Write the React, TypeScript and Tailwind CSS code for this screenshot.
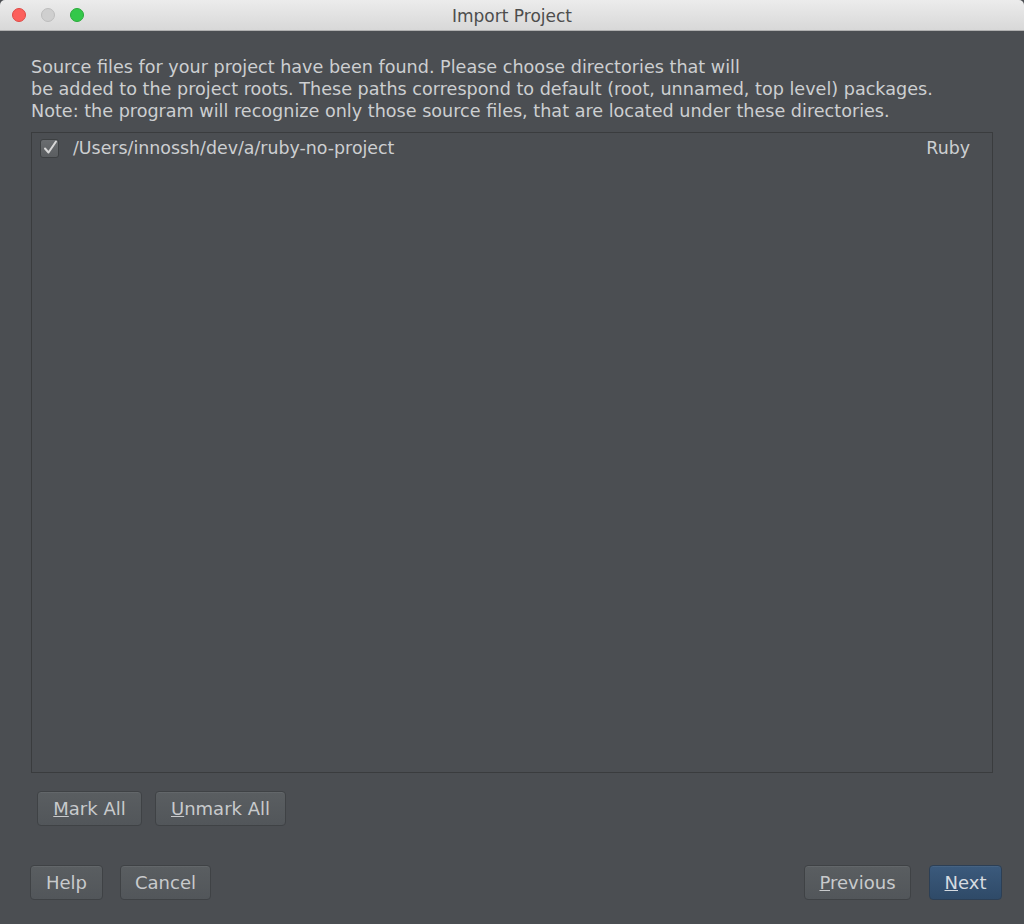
import React from "react";

const font = { fontFamily: '"DejaVu Sans", "Lucida Grande", sans-serif' };

function Btn({ children, w, blue }: { children: React.ReactNode; w: string; blue?: boolean }) {
  return (
    <div
      className={`${w} h-[35px] flex items-center justify-center rounded-[4px] border text-[18px] ${
        blue
          ? "border-[#2c3f55] bg-gradient-to-b from-[#3b5a7c] to-[#2f4a68] text-[#d6dbe0]"
          : "border-[#3f4245] bg-gradient-to-b from-[#5a5e61] to-[#52565a] text-[#c8cacc]"
      } shadow-[inset_0_1px_0_rgba(255,255,255,0.06)]`}
    >
      {children}
    </div>
  );
}

export default function App() {
  return (
    <div className="w-[1024px] h-[924px] bg-[#4b4e52] flex flex-col overflow-hidden" style={font}>
      <div className="h-[31px] bg-gradient-to-b from-[#ececec] to-[#d8d8d8] border-b border-[#b0b0b0] relative flex items-center justify-center rounded-t-[5px]">
        <div className="absolute left-[12px] top-[8px] flex gap-[15px]">
          <div className="w-[14px] h-[14px] rounded-full bg-[#fc605c] border border-[#de4a45]" />
          <div className="w-[14px] h-[14px] rounded-full bg-[#cfcfcf] border border-[#bdbdbd]" />
          <div className="w-[14px] h-[14px] rounded-full bg-[#34c84a] border border-[#2aaa3a]" />
        </div>
        <span className="text-[17px] text-[#4d4d4d] mt-[3px]">Import Project</span>
      </div>
      <div className="flex-1 flex flex-col px-[31px] pt-[25px]">
        <div className="text-[17.6px] leading-[22px] text-[#cdcfd1]">
          <div>Source files for your project have been found. Please choose directories that will</div>
          <div>be added to the project roots. These paths correspond to default (root, unnamed, top level) packages.</div>
          <div>Note: the program will recognize only those source files, that are located under these directories.</div>
        </div>
        <div className="mt-[10px] h-[641px] border border-[#3a3c3e] bg-[#4b4e52]">
          <div className="flex items-center h-[30px] pl-[8px] pr-[22px]">
            <div className="w-[19px] h-[19px] rounded-[3px] bg-gradient-to-b from-[#6a6d70] to-[#5a5d60] border border-[#3d4042] flex items-center justify-center">
              <svg width="16" height="16" viewBox="0 0 16 16">
                <path d="M3 8.5 L6.5 12.5 L14 1.5" fill="none" stroke="#d8d8d8" strokeWidth="2" strokeLinecap="round" strokeLinejoin="round" />
              </svg>
            </div>
            <span className="ml-[14px] text-[17.4px] text-[#cdcfd1]">/Users/innossh/dev/a/ruby-no-project</span>
            <span className="ml-auto text-[17.4px] text-[#cdcfd1]">Ruby</span>
          </div>
        </div>
        <div className="flex gap-[13px] mt-[18px] pl-[6px]">
          <Btn w="w-[105px]"><span><u>M</u>ark All</span></Btn>
          <Btn w="w-[131px]"><span><u>U</u>nmark All</span></Btn>
        </div>
        <div className="flex mt-[39px]">
          <div className="flex gap-[17px] -ml-[1px]">
            <Btn w="w-[73px]">Help</Btn>
            <Btn w="w-[91px]">Cancel</Btn>
          </div>
          <div className="ml-auto flex gap-[18px] -mr-[9px]">
            <Btn w="w-[107px]"><span><u>P</u>revious</span></Btn>
            <Btn w="w-[73px]" blue><span><u>N</u>ext</span></Btn>
          </div>
        </div>
      </div>
    </div>
  );
}
